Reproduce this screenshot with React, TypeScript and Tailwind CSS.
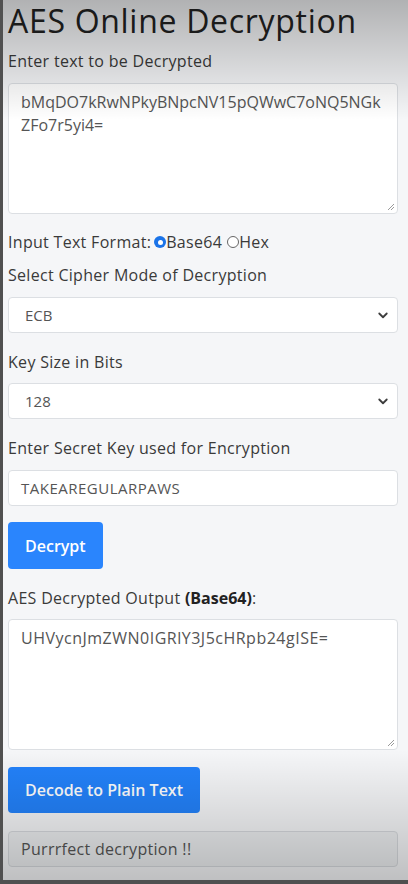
import React from 'react';

const font = { fontFamily: '"Open Sans", "Noto Sans", sans-serif' };

const Chevron = () => (
  <svg width="12" height="12" viewBox="0 0 16 16" className="shrink-0">
    <path d="M3 6l5 5 5-5" fill="none" stroke="#3d3d3d" strokeWidth="2.4" strokeLinecap="round" strokeLinejoin="round" />
  </svg>
);

const Grip = () => (
  <svg width="9" height="9" viewBox="0 0 9 9" className="absolute right-[2px] bottom-[2px]">
    <path d="M8 2L2 8M8 5L5 8" stroke="#9a9a9a" strokeWidth="1" />
  </svg>
);

const Label: React.FC<{ children: React.ReactNode; className?: string }> = ({ children, className = '' }) => (
  <div className={`text-[16px] leading-[22px] tracking-[0.3px] text-[#3a3a3a] whitespace-nowrap ${className}`}>{children}</div>
);

const SelectBox: React.FC<{ value: string; className?: string }> = ({ value, className = '' }) => (
  <div className={`h-[36px] bg-white border border-[#dcdfe3] rounded-[4px] flex items-center justify-between pl-[16px] pr-[8px] ${className}`}>
    <span className="text-[15px] text-[#555]">{value}</span>
    <Chevron />
  </div>
);

const TextBox: React.FC<{ lines: string[]; tight?: boolean; className?: string }> = ({ lines, tight, className = '' }) => (
  <div className={`relative h-[131px] bg-white border border-[#dcdfe3] rounded-[4px] pl-[12px] pr-[8px] pt-[7px] ${className}`}>
    {lines.map((l) => (
      <p key={l} className={`text-[16px] leading-[23px] text-[#555] whitespace-nowrap ${tight ? 'tracking-normal' : 'tracking-[0.5px]'}`}>{l}</p>
    ))}
    <Grip />
  </div>
);

export default function App() {
  return (
    <div className="relative w-[408px] h-[884px] overflow-hidden bg-[#f5f6f8] border-l-[3px] border-b-[4px] border-[#505050]" style={font}>
      <div className="pl-[5px] pr-[10px] flex flex-col">
        <h1 className="text-[32px] leading-[42px] tracking-[0.7px] text-[#222] whitespace-nowrap">AES Online Decryption</h1>

        <Label className="mt-[8px]">Enter text to be Decrypted</Label>
        <TextBox className="mt-[11px]" tight lines={['bMqDO7kRwNPkyBNpcNV15pQWwC7oNQ5NGk', 'ZFo7r5yi4=']} />

        <Label className="mt-[17px] flex items-center">
          Input Text Format:
          <span className="ml-[3px] w-[12px] h-[12px] rounded-full bg-[#1a73e8] flex items-center justify-center">
            <span className="w-[5px] h-[5px] rounded-full bg-white" />
          </span>
          <span>Base64</span>
          <span className="ml-[5px] w-[12px] h-[12px] rounded-full border border-[#666] bg-white" />
          <span>Hex</span>
        </Label>

        <Label className="mt-[11px]">Select Cipher Mode of Decryption</Label>
        <SelectBox className="mt-[11px]" value="ECB" />

        <Label className="mt-[18px]">Key Size in Bits</Label>
        <SelectBox className="mt-[10px]" value="128" />

        <Label className="mt-[18px]">Enter Secret Key used for Encryption</Label>
        <div className="mt-[11px] h-[36px] bg-white border border-[#dcdfe3] rounded-[4px] flex items-center pl-[12px]">
          <span className="text-[15px] tracking-[0.5px] text-[#555]">TAKEAREGULARPAWS</span>
        </div>

        <div className="mt-[16px]">
          <button className="h-[47px] px-[17px] rounded-[4px] bg-[#2a85fd] text-white text-[16px] font-semibold">Decrypt</button>
        </div>

        <Label className="mt-[18px]">
          AES Decrypted Output <span className="font-bold tracking-normal text-[#222]">(Base64)</span>:
        </Label>
        <TextBox className="mt-[10px]" lines={['UHVycnJmZWN0IGRlY3J5cHRpb24gISE=']} />

        <div className="mt-[17px]">
          <button className="h-[46px] px-[17px] rounded-[4px] bg-[#2382fb] text-white text-[16px] font-semibold">Decode to Plain Text</button>
        </div>

        <div className="mt-[18px] h-[36px] bg-[#eceef0] border border-[#d6d9dd] rounded-[4px] flex items-center pl-[12px]">
          <span className="text-[16px] tracking-[0.3px] text-[#555]">Purrrfect decryption !!</span>
        </div>
      </div>

      <div className="pointer-events-none absolute inset-x-0 top-0 h-[120px] bg-gradient-to-b from-[rgba(0,0,0,0.28)] to-transparent" />
      <div className="pointer-events-none absolute inset-x-0 bottom-0 h-[130px] bg-gradient-to-t from-[rgba(0,0,0,0.22)] to-transparent" />
    </div>
  );
}
